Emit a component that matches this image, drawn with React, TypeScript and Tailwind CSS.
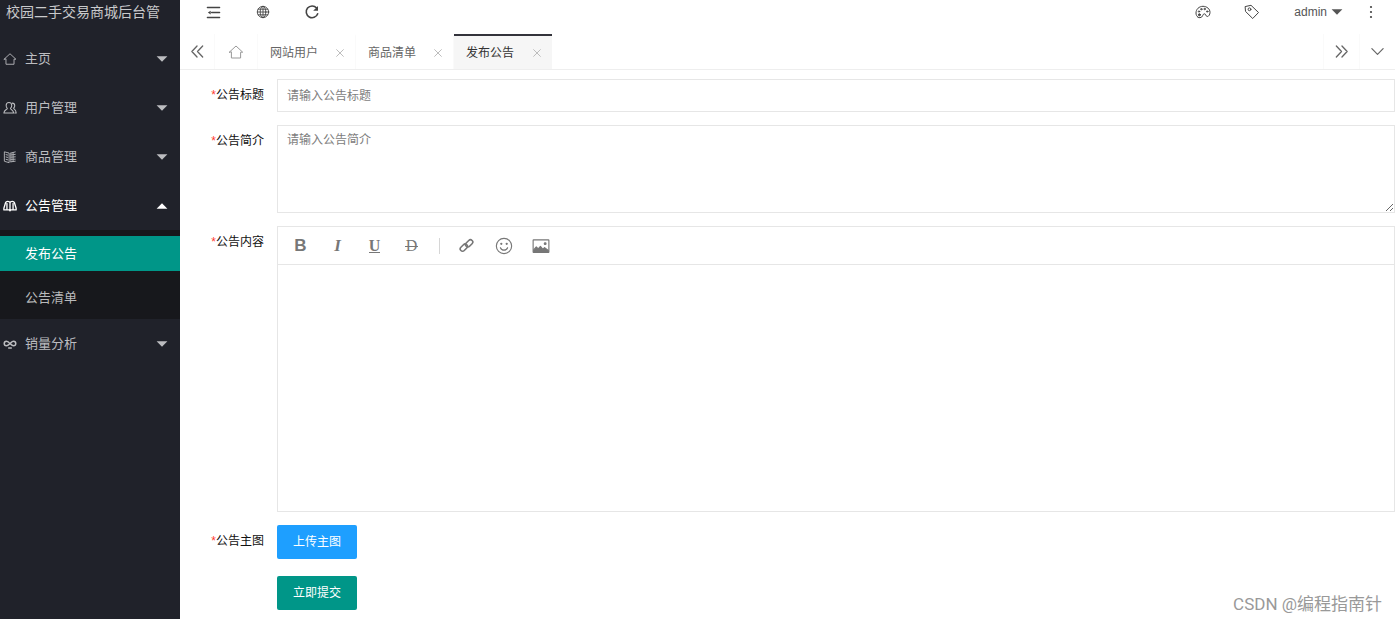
import type { ReactNode } from "react";

type IconProps = { children: ReactNode; size?: string; width?: number };

function Icon({ children, size = "size-4", width = 1 }: IconProps) {
  return (
    <svg
      viewBox="0 0 16 16"
      className={size}
      fill="none"
      stroke="currentColor"
      strokeWidth={width}
      strokeLinecap="round"
      strokeLinejoin="round"
      aria-hidden="true"
    >
      {children}
    </svg>
  );
}

function Caret({ up = false }: { up?: boolean }) {
  return (
    <svg viewBox="0 0 12 6" className="h-[6px] w-[12px]" fill="currentColor" aria-hidden="true">
      <path d={up ? "M6 0.3 11.4 5.7H0.6Z" : "M0.6 0.3H11.4L6 5.7Z"} />
    </svg>
  );
}

const homePath = <path d="M1.3 8.2 8 2l6.7 6.2H12.6V14H3.4V8.2Z" />;

const icons = {
  home: <Icon size="size-[14px]">{homePath}</Icon>,
  users: (
    <Icon size="size-[14px]" width={1.2}>
      <path d="M6.8 1.8c2 0 3.2 1.4 3.2 3.4 0 1.500-.7 2.600-1.400 3.300 0 1.300 3.400 1.600 3.600 5.300H1c.2-3.700 3.900-4 3.900-5.300-.7-.7-1.300-1.800-1.300-3.300 0-2 1.200-3.400 3.200-3.400Z" />
      <path d="M10.500 2.400c1.900 0 2.900 1.200 2.900 2.900 0 1.300-.6 2.200-1.200 2.900 0 1.200 2.700 1.500 2.900 5.600h-1.600" />
    </Icon>
  ),
  goods: (
    <Icon size="size-[14px]">
      <path d="M2 2.200 7 3.500v11L2 13ZM3.500 5.300l2 .5M3.500 8l2 .5M3.500 10.700l2 .5M9 3.500l5-1.300M9 5.700l5-.7M9 8.200l5-.4M9 10.700l5-.2M9 13.500l5-.7M9 3.500v10M11.500 3v10" />
    </Icon>
  ),
  notice: (
    <Icon size="size-[14px]" width={1.5}>
      <path d="M8 4C7.400 2.300 3.700 2 3 4L1 10.500v2h6.200l.8 1 .8-1H15v-2L13 4C12.300 2 8.600 2.300 8 4ZM8 4v9M4.500 5v6.500M11.500 5v6.500" />
    </Icon>
  ),
  sales: (
    <Icon size="size-[14px]" width={1.7}>
      <path d="M8 7.600C6.500 5.600 5.500 4.800 4 4.800a2.600 2.600 0 1 0 0 5.200c1.700 0 2.700-1.200 4-2.400s2.300-2.800 4-2.800a2.600 2.600 0 1 1 0 5.200c-1.700 0-2.700-1.200-4-2.400ZM6.500 12.600h3" />
    </Icon>
  ),
};

function MenuItem({ icon, label, open = false }: { icon: ReactNode; label: string; open?: boolean }) {
  return (
    <button
      type="button"
      aria-expanded={open}
      className={
        open
          ? "flex h-[49px] w-full items-center pr-3 pl-[3px] text-[13px] text-white"
          : "flex h-[49px] w-full items-center pr-3 pl-[3px] text-[13px] text-[#bcbdc0]"
      }
    >
      {icon}
      <span className="ml-2 grow text-left">{label}</span>
      <Caret up={open} />
    </button>
  );
}

function Sidebar() {
  return (
    <aside className="w-[180px] shrink-0 bg-[#20222a]">
      <h1 className="h-[34px] overflow-hidden pl-[6px] text-[14px] leading-6 whitespace-nowrap text-[#c9cacc]">
        校园二手交易商城后台管
      </h1>
      <nav>
        <MenuItem icon={icons.home} label="主页" />
        <MenuItem icon={icons.users} label="用户管理" />
        <MenuItem icon={icons.goods} label="商品管理" />
        <MenuItem icon={icons.notice} label="公告管理" open />
        <div className="flex flex-col gap-[9px] bg-[#17181c] pt-[6px] pb-1 text-[13px] leading-[35px]">
          <a href="#publish" className="bg-[#009688] pl-[25px] text-white">
            发布公告
          </a>
          <a href="#list" className="pl-[25px] text-[#b9babb]">
            公告清单
          </a>
        </div>
        <MenuItem icon={icons.sales} label="销量分析" />
      </nav>
    </aside>
  );
}

function HeaderButton({ label, children }: { label: string; children: ReactNode }) {
  return (
    <button type="button" aria-label={label} className="flex h-6 w-[49px] items-center justify-center">
      {children}
    </button>
  );
}

function Header() {
  return (
    <header className="flex h-[34px] items-start justify-between pr-[5px] pl-[9px] text-[#444]">
      <div className="flex">
        <HeaderButton label="收起菜单">
          <Icon size="size-[15px]" width={1.5}>
            <path d="M1.500 2.700h13M6 8h8.500M1.500 13.300h13" />
            <path d="M5 6v4L2 8Z" fill="currentColor" stroke="none" />
          </Icon>
        </HeaderButton>
        <HeaderButton label="前台">
          <Icon size="size-[14px]">
            <circle cx="8" cy="8" r="6.500" />
            <ellipse cx="8" cy="8" rx="3.200" ry="6.500" />
            <path d="M8 1.500v13M1.500 8h13M2.500 4.800h11M2.500 11.200h11" />
          </Icon>
        </HeaderButton>
        <HeaderButton label="刷新">
          <Icon width={1.6}>
            <path d="M12.600 4A5.900 5.900 0 1 0 13.700 9.800" />
            <path d="M14 2v4.800H9.200Z" fill="currentColor" stroke="none" />
          </Icon>
        </HeaderButton>
      </div>
      <div className="flex">
        <HeaderButton label="主题">
          <Icon>
            <path d="M3 13.200C1.600 12.300 1 10.700 1 9c0-3.800 3.100-6.700 7-6.700S15 5 15 8.300c0 2.300-1.200 4.200-2.700 4.200-1.700 0-1.200-2.700-3-2.700-1.900 0-1.300 3.900-4.300 3.900-.8 0-1.400-.1-2-.5Z" />
            <circle cx="4.400" cy="10.800" r="1" fill="currentColor" />
            <circle cx="4" cy="7.500" r=".7" />
            <circle cx="6.300" cy="5.200" r=".7" />
            <circle cx="9.600" cy="5" r=".7" />
            <circle cx="12.200" cy="7.500" r=".7" />
          </Icon>
        </HeaderButton>
        <HeaderButton label="便签">
          <Icon>
            <path d="M1.500 2.500 7 1.300l7.500 7.200-5.800 6L1.800 7.700Z" />
            <circle cx="5.500" cy="5.300" r="1.400" />
          </Icon>
        </HeaderButton>
        <button type="button" className="flex h-6 items-center gap-1 pr-[3px] pl-[18px] text-[12px] text-[#555]">
          admin
          <Caret />
        </button>
        <HeaderButton label="更多">
          <Icon>
            <g fill="currentColor" stroke="none">
              <circle cx="8" cy="3" r="1.100" />
              <circle cx="8" cy="8" r="1.100" />
              <circle cx="8" cy="13" r="1.100" />
            </g>
          </Icon>
        </HeaderButton>
      </div>
    </header>
  );
}

function Tab({ label, active = false }: { label: string; active?: boolean }) {
  return (
    <div
      className={
        active
          ? "flex w-[98px] items-center justify-between border-t-2 border-[#33333b] bg-[#f6f6f6] pr-[9px] pl-3 text-[#333]"
          : "flex w-[98px] items-center justify-between border-t-2 border-r border-t-transparent border-r-[#fafafa] pr-[9px] pl-3 text-[#666]"
      }
    >
      <a href="#tab" className="text-[12px] whitespace-nowrap">
        {label}
      </a>
      <button type="button" aria-label={"关闭" + label} className="text-[#bbb]">
        <Icon size="size-3" width={1.3}>
          <path d="m3.500 3.500 9 9M12.500 3.500l-9 9" />
        </Icon>
      </button>
    </div>
  );
}

function TabBar() {
  return (
    <div className="mr-[5px] flex h-9 border-b border-[#eeeeee] text-[#666]">
      <button type="button" aria-label="向左" className="flex w-[35px] items-center justify-center border-r border-[#fafafa]">
        <Icon size="size-[15px]" width={1.4}>
          <path d="M7.500 2.200 2 8l5.500 5.800M13.500 2.200 8 8l5.500 5.800" />
        </Icon>
      </button>
      <button
        type="button"
        aria-label="主页"
        className="flex w-[43px] items-center justify-center border-r border-[#fafafa] text-[#999]"
      >
        <Icon>{homePath}</Icon>
      </button>
      <Tab label="网站用户" />
      <Tab label="商品清单" />
      <Tab label="发布公告" active />
      <div className="grow" />
      <button type="button" aria-label="向右" className="flex w-9 items-center justify-center border-l border-[#fafafa]">
        <Icon size="size-[15px]" width={1.4}>
          <path d="M2.500 2.200 8 8l-5.500 5.800M8.500 2.200 14 8l-5.500 5.800" />
        </Icon>
      </button>
      <button type="button" aria-label="标签操作" className="flex w-9 items-center justify-center border-l border-[#fafafa]">
        <Icon size="size-[15px]" width={1.3}>
          <path d="m2 5 6 6 6-6" />
        </Icon>
      </button>
    </div>
  );
}

function Field({ label, id, children }: { label: string; id: string; children: ReactNode }) {
  return (
    <div className="flex gap-[13px]">
      <label htmlFor={id} className="w-[84px] shrink-0 text-right text-[12px] leading-[33px] text-[#111]">
        <span className="text-[#ff3b30]">*</span>
        {label}
      </label>
      <div className="min-w-0 grow">{children}</div>
    </div>
  );
}

function Tool({ label, children }: { label: string; children: ReactNode }) {
  return (
    <button type="button" aria-label={label} className="flex w-[37px] items-center justify-center">
      {children}
    </button>
  );
}

function Editor() {
  return (
    <div className="border border-[#e6e6e6]">
      <div className="flex h-[38px] border-b border-[#e6e6e6] pl-1 text-[#777]">
        <Tool label="加粗">
          <span className="text-[17px] font-bold">B</span>
        </Tool>
        <Tool label="斜体">
          <span className="font-['Liberation_Serif',serif] text-[17px] font-bold italic">I</span>
        </Tool>
        <Tool label="下划线">
          <span className="border-b border-[#777] font-['Liberation_Serif',serif] text-[16px] leading-[13px] font-bold">
            U
          </span>
        </Tool>
        <Tool label="删除线">
          <span className="relative px-px font-['Liberation_Serif',serif] text-[16px]">
            D
            <span className="absolute inset-x-0 top-1/2 h-px bg-[#777]" />
          </span>
        </Tool>
        <div className="flex w-[18px] items-center justify-center">
          <span className="h-4 w-px bg-[#d6d6d6]" />
        </div>
        <Tool label="插入链接">
          <Icon size="size-[15px]" width={1.7}>
            <g transform="rotate(-45 8 8)">
              <rect x="0" y="5.100" width="8.800" height="5" rx="2.500" />
              <rect x="7.200" y="5.900" width="8.800" height="5" rx="2.500" />
            </g>
          </Icon>
        </Tool>
        <Tool label="表情">
          <Icon size="size-[18px]">
            <circle cx="8" cy="8" r="6.800" />
            <path d="M4.800 9.500c.6 1.500 1.800 2.200 3.200 2.200s2.600-.7 3.200-2.200" />
            <circle cx="5.600" cy="6" r=".5" fill="currentColor" />
            <circle cx="10.400" cy="6" r=".5" fill="currentColor" />
          </Icon>
        </Tool>
        <Tool label="插入图片">
          <Icon size="size-[18px]">
            <rect x="1" y="2.500" width="14" height="11.300" rx=".4" />
            <path d="M1.500 13.500v-2l2.300-2.700 1.700 1.700L7.500 8.300l2 2.500 1.700-1.400 3.300 2.600v1.500Z" fill="currentColor" />
            <circle cx="11.700" cy="5.900" r=".8" fill="currentColor" />
          </Icon>
        </Tool>
      </div>
      <textarea id="content" className="block h-[246px] w-full resize-none p-2 text-[13px] outline-none" />
    </div>
  );
}

const boxClass =
  "block w-full border border-[#e6e6e6] bg-white px-[9px] text-[12px] text-[#333] outline-none placeholder:text-[#7d7d7d]";

function NoticeForm() {
  return (
    <form className="flex flex-col gap-[13px] pt-[9px] pr-[5px] pb-[9px]" onSubmit={(e) => e.preventDefault()}>
      <Field label="公告标题" id="title">
        <input id="title" type="text" placeholder="请输入公告标题" className={`${boxClass} h-[33px]`} />
      </Field>
      <Field label="公告简介" id="summary">
        <textarea id="summary" placeholder="请输入公告简介" className={`${boxClass} h-[88px] py-1 leading-5`} />
      </Field>
      <Field label="公告内容" id="content">
        <Editor />
      </Field>
      <Field label="公告主图" id="cover">
        <button id="cover" type="button" className="h-[34px] rounded-[2px] bg-[#1e9fff] px-4 text-[12px] text-white">
          上传主图
        </button>
      </Field>
      <div className="mt-1 pl-[97px]">
        <button type="submit" className="h-[34px] rounded-[2px] bg-[#009688] px-4 text-[12px] text-white">
          立即提交
        </button>
      </div>
    </form>
  );
}

export default function App() {
  return (
    <div className="relative flex min-h-screen bg-white font-['Liberation_Sans','Noto_Sans_CJK_SC',sans-serif]">
      <Sidebar />
      <main className="min-w-0 grow">
        <Header />
        <TabBar />
        <NoticeForm />
      </main>
      <p className="absolute right-[18px] bottom-[3px] font-[Roboto,'Noto_Sans_CJK_SC',sans-serif] text-[17px] leading-6 text-[#999]">
        CSDN @编程指南针
      </p>
    </div>
  );
}
